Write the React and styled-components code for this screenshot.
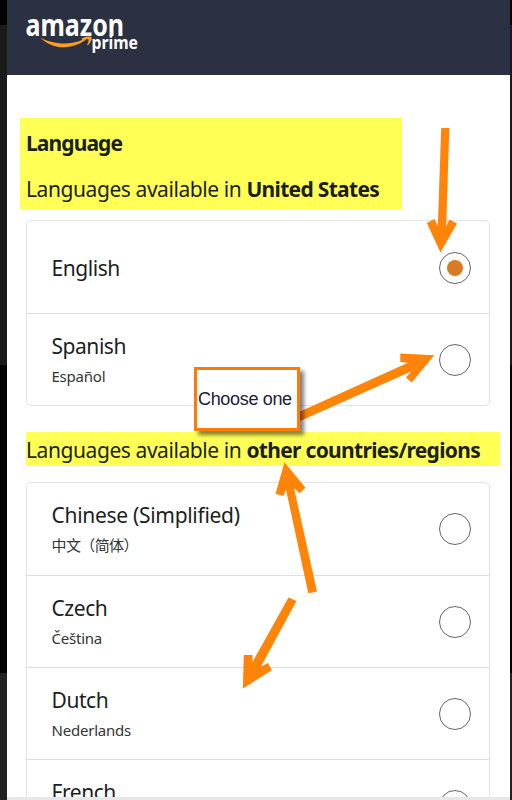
import React from "react";
import styled, { createGlobalStyle } from "styled-components";

const GlobalStyle = createGlobalStyle`
  * {
    box-sizing: border-box;
  }
  body {
    margin: 0;
    overflow: hidden;
    font-family: "Noto Sans", "Noto Sans CJK SC", sans-serif;
    color: #1c1e1f;
  }
`;

const Backdrop = styled.div`
  position: relative;
  display: flex;
  width: 512px;
  height: 800px;
  padding: 0 2px 0 7px;
  overflow: hidden;
  background: linear-gradient(
    #020202 25px,
    #1b1a1b 25px,
    #1b1a1b 365px,
    #030201 365px,
    #030201 673px,
    #232223 673px
  );
`;

const Screen = styled.div`
  display: flex;
  flex-direction: column;
  width: 503px;
  height: 800px;
  background: #fff;
`;

const Header = styled.header`
  flex: none;
  height: 75px;
  padding: 6px 0 0 13px;
  background: #2b3042;
`;

const Logo = styled.svg`
  display: block;
  width: 140px;
  height: 60px;
  font-weight: 700;
  fill: #fff;
`;

const Content = styled.main`
  flex: 1;
  min-height: 0;
  padding: 43px 0 0 13px;
  overflow: hidden;
`;

const Intro = styled.div`
  width: 382px;
  height: 91px;
  padding: 9px 0 0 6px;
  background: #ffff56;
`;

const Title = styled.div`
  height: 46px;
  font-size: 21px;
  font-weight: 700;
  line-height: 32px;
  letter-spacing: -0.9px;
`;

const Heading = styled.div`
  height: 32px;
  font-size: 21px;
  line-height: 32px;
  white-space: nowrap;
  letter-spacing: -0.42px;
`;

const Strong = styled.b`
  letter-spacing: -0.69px;
`;

const Banner = styled.div`
  width: 474px;
  height: 34px;
  margin: 26px 0 16px 6px;
  padding: 2px 0 0;
  background: #ffff56;
`;

const List = styled.div`
  width: 464px;
  margin-top: ${(props) => props.$gap || 0}px;
  margin-left: 6px;
  border: 1.5px solid #e3e3e3;
  border-radius: 5px;
`;

const Row = styled.div`
  display: flex;
  align-items: center;
  justify-content: space-between;
  height: 92px;
  padding: ${(props) => (props.$single ? 2 : 0)}px 18px 0 24.5px;
  & + & {
    border-top: 1px solid #dedede;
  }
`;

const Name = styled.div`
  font-size: 21px;
  line-height: 30px;
  letter-spacing: ${(props) => props.$spacing ?? -0.45}px;
`;

const Native = styled.div`
  margin-top: 2px;
  font-size: 15px;
  line-height: 26px;
  color: #333536;
  letter-spacing: ${(props) => props.$spacing ?? -0.22}px;
`;

const Radio = styled.span`
  display: flex;
  align-items: center;
  justify-content: center;
  width: 32px;
  height: 32px;
  border: 1.5px solid #666;
  border-radius: 50%;
`;

const Dot = styled.span`
  width: 16px;
  height: 16px;
  border-radius: 50%;
  background: #d97b22;
`;

const BottomBar = styled.div`
  flex: none;
  height: 3px;
  background: #e6e6eb;
`;

const Arrows = styled.svg`
  position: absolute;
  top: 0;
  left: 0;
  fill: #ff8408;
`;

const Callout = styled.div`
  position: absolute;
  top: 367px;
  left: 194px;
  display: flex;
  align-items: center;
  width: 106px;
  height: 64px;
  padding-left: 1px;
  border: 3px solid #ff7b05;
  background: #fff;
  box-shadow: 4px 4px 4px rgba(0, 0, 0, 0.5);
  font-family: "Liberation Sans", Arial, sans-serif;
  font-size: 18px;
  line-height: 20px;
  letter-spacing: -0.33px;
  color: #20203a;
  white-space: nowrap;
`;

const local = [
  { name: "English", selected: true },
  { name: "Spanish", native: "Español" },
];

const others = [
  {
    name: "Chinese (Simplified)",
    native: "中文（简体）",
    spacing: -0.3,
    nativeSpacing: -0.6,
  },
  { name: "Czech", native: "Čeština" },
  { name: "Dutch", native: "Nederlands" },
  { name: "French", native: "Français" },
];

function Language({ lang }) {
  return (
    <Row $single={!lang.native}>
      <div>
        <Name $spacing={lang.spacing}>{lang.name}</Name>
        {lang.native && (
          <Native $spacing={lang.nativeSpacing}>{lang.native}</Native>
        )}
      </div>
      <Radio>{lang.selected && <Dot />}</Radio>
    </Row>
  );
}

function App() {
  return (
    <>
      <GlobalStyle />
      <Backdrop>
        <Screen>
          <Header>
            <Logo viewBox="20 6 140 60">
              <text x="25.5" y="35.5" fontSize="30" textLength="98.5" lengthAdjust="spacingAndGlyphs">
                amazon
              </text>
              <text x="91.5" y="49.3" fontSize="17.5" textLength="46.5" lengthAdjust="spacingAndGlyphs">
                prime
              </text>
              <path
                fill="#ff9d1e"
                d="M40 37.2C51 43.8 69 46 82.5 39.8L81.3 38.500C85 36.3 90.5 35.8 91.5 37.2C92.2 39 90.5 43 87.8 45.3C87.3 45.4 87 45 87.3 44.3C88.5 41.5 89 40 88.3 39.2C87.5 38.6 86 39.2 84.8 40.5C71 50 52.5 50 40 37.2Z"
              />
            </Logo>
          </Header>
          <Content>
            <Intro>
              <Title>Language</Title>
              <Heading>
                Languages available in <Strong>United States</Strong>
              </Heading>
            </Intro>
            <List $gap={11}>
              {local.map((lang) => (
                <Language key={lang.name} lang={lang} />
              ))}
            </List>
            <Banner>
              <Heading>
                Languages available in <Strong>other countries/regions</Strong>
              </Heading>
            </Banner>
            <List>
              {others.map((lang) => (
                <Language key={lang.name} lang={lang} />
              ))}
            </List>
          </Content>
          <BottomBar />
        </Screen>
        <Arrows width="512" height="800" viewBox="0 0 512 800">
          <path d="M441.2 128H449.3L446.2 226.5L449.3 219.5L457 223.5L440.5 252.5L426.8 223L434.5 219L437.8 226.5Z" />
          <path d="M299 412L408 362.8L400.3 362V353.5L434.3 355.3L411.7 382.5L406 377.5L411 371.5L299 421.5Z" />
          <path d="M308.3 593.3L286 489.5L283.5 496L275.5 493.7L284.5 462.3L305.5 487.8L299.5 493.2L294 488L317 591.5Z" />
          <path d="M288.5 597.5L296.5 601L261 666.5L268 663L271.8 670.3L242.8 688.7L243.8 655H252.5V662Z" />
        </Arrows>
        <Callout>Choose one</Callout>
      </Backdrop>
    </>
  );
}

export default App;
